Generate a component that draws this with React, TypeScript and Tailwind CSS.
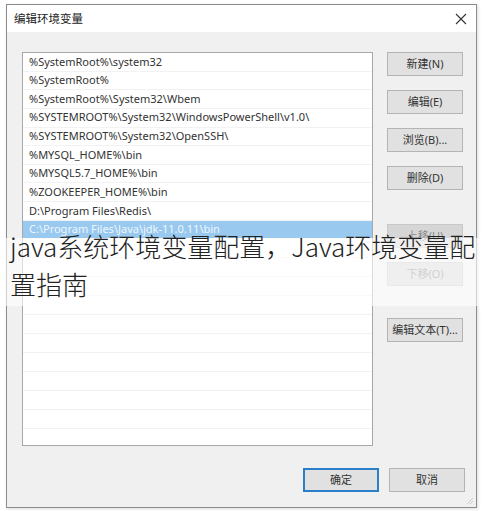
const paths = [
  '%SystemRoot%\\system32',
  '%SystemRoot%',
  '%SystemRoot%\\System32\\Wbem',
  '%SYSTEMROOT%\\System32\\WindowsPowerShell\\v1.0\\',
  '%SYSTEMROOT%\\System32\\OpenSSH\\',
  '%MYSQL_HOME%\\bin',
  '%MYSQL5.7_HOME%\\bin',
  '%ZOOKEEPER_HOME%\\bin',
  'D:\\Program Files\\Redis\\',
  'C:\\Program Files\\Java\\jdk-11.0.11\\bin',
]

const ui = { fontFamily: '"Noto Sans", "Noto Sans CJK SC", sans-serif' }

function Btn({ label, className = '', disabled = false, primary = false }: { label: string; className?: string; disabled?: boolean; primary?: boolean }) {
  return (
    <div
      className={`w-[76px] h-[24px] flex items-center justify-center text-[11px] ${
        primary ? 'border-2 border-[#2a7fc8] bg-[#e1e1e1] text-[#333]' : disabled ? 'border border-[#c8c8c8] bg-[#d6d6d6] text-[#8a8a8a]' : 'border border-[#b4b4b4] bg-[#e1e1e1] text-[#333]'
      } ${className}`}
    >
      {label}
    </div>
  )
}

export default function App() {
  const empty = Array.from({ length: 11 })
  return (
    <div className="relative w-[490px] h-[511px] bg-white pt-[4px] pl-[6px] overflow-hidden" style={ui}>
      <div className="w-[471px] h-[504px] border border-[#8c8c8c] flex flex-col shadow-[1px_1px_3px_rgba(0,0,0,0.15)]">
        <div className="h-[27px] bg-white flex items-center justify-between pl-[7px] pr-[9px]">
          <span className="text-[11.5px] text-[#222]">编辑环境变量</span>
          <svg width="12" height="12" viewBox="0 0 12 12" className="text-[#333]">
            <path d="M1 1L11 11M11 1L1 11" stroke="currentColor" strokeWidth="1.1" fill="none" />
          </svg>
        </div>
        <div className="flex-1 bg-[#f0f0f0] pt-[20px] pl-[15px] flex flex-col relative">
          <div className="flex">
            <div className="w-[351px] h-[394px] bg-white border border-[#a8a8a8] overflow-hidden">
              {paths.map((p, i) => (
                <div
                  key={p}
                  className={`h-[18.65px] flex items-center pl-[6px] text-[11px] border-b border-[#f2f2f2] ${
                    i === 9 ? 'bg-[#99c9ef] text-[#eef6fd]' : 'text-[#333]'
                  }`}
                >
                  {p}
                </div>
              ))}
              {empty.map((_, i) => (
                <div key={i} className="h-[19px] border-b border-[#f2f2f2]" />
              ))}
            </div>
            <div className="ml-[14px] flex flex-col">
              <Btn label="新建(N)" />
              <Btn label="编辑(E)" className="mt-[14px]" />
              <Btn label="浏览(B)..." className="mt-[14px]" />
              <Btn label="删除(D)" className="mt-[14px]" />
              <Btn label="上移(U)" disabled className="mt-[34px]" />
              <Btn label="下移(O)" disabled className="mt-[14px]" />
              <Btn label="编辑文本(T)..." className="mt-[32px]" />
            </div>
          </div>
          <div className="flex justify-end gap-[10px] pr-[11px] mt-[22px]">
            <Btn label="确定" primary />
            <Btn label="取消" />
          </div>
          <svg width="10" height="10" viewBox="0 0 10 10" className="absolute right-[2px] bottom-[2px]">
            <path d="M9 3L3 9M9 6L6 9" stroke="#c8c8c8" strokeWidth="1" />
          </svg>
        </div>
      </div>
      <div className="absolute left-0 top-[238px] w-[490px] h-[68px] bg-white/60" />
      <div
        className="absolute left-[10px] top-[227px] w-[476px] text-[26px] leading-[38px] font-light text-[#222]"
        style={{ fontFamily: '"Noto Sans CJK SC", "Noto Sans", sans-serif' }}
      >
        java系统环境变量配置，Java环境变量配置指南
      </div>
    </div>
  )
}
